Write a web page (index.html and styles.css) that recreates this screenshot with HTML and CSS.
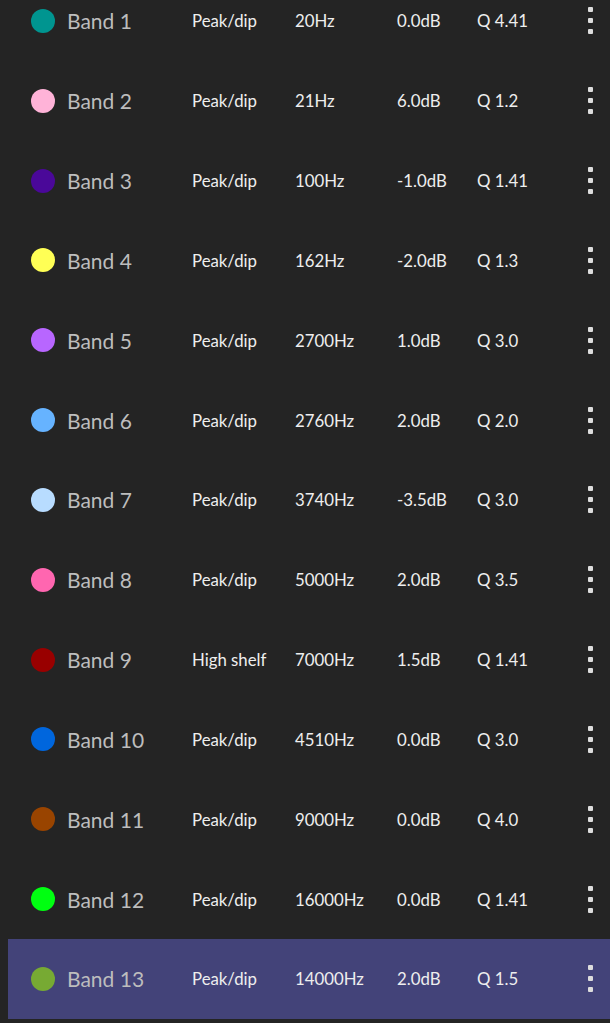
FILE: index.html
```html
<!DOCTYPE html>
<html>
<head>
<meta charset="utf-8">
<link rel="stylesheet" href="styles.css">
</head>
<body>
<ul class="bands">
  <li class="band"><span class="dot c1"></span><span class="name">Band 1</span><span class="cell">Peak/dip</span><span class="cell">20Hz</span><span class="cell">0.0dB</span><span class="cell">Q 4.41</span><span class="menu"><i></i><i></i><i></i></span></li>
  <li class="band"><span class="dot c2"></span><span class="name">Band 2</span><span class="cell">Peak/dip</span><span class="cell">21Hz</span><span class="cell">6.0dB</span><span class="cell">Q 1.2</span><span class="menu"><i></i><i></i><i></i></span></li>
  <li class="band"><span class="dot c3"></span><span class="name">Band 3</span><span class="cell">Peak/dip</span><span class="cell">100Hz</span><span class="cell">-1.0dB</span><span class="cell">Q 1.41</span><span class="menu"><i></i><i></i><i></i></span></li>
  <li class="band"><span class="dot c4"></span><span class="name">Band 4</span><span class="cell">Peak/dip</span><span class="cell">162Hz</span><span class="cell">-2.0dB</span><span class="cell">Q 1.3</span><span class="menu"><i></i><i></i><i></i></span></li>
  <li class="band"><span class="dot c5"></span><span class="name">Band 5</span><span class="cell">Peak/dip</span><span class="cell">2700Hz</span><span class="cell">1.0dB</span><span class="cell">Q 3.0</span><span class="menu"><i></i><i></i><i></i></span></li>
  <li class="band"><span class="dot c6"></span><span class="name">Band 6</span><span class="cell">Peak/dip</span><span class="cell">2760Hz</span><span class="cell">2.0dB</span><span class="cell">Q 2.0</span><span class="menu"><i></i><i></i><i></i></span></li>
  <li class="band"><span class="dot c7"></span><span class="name">Band 7</span><span class="cell">Peak/dip</span><span class="cell">3740Hz</span><span class="cell">-3.5dB</span><span class="cell">Q 3.0</span><span class="menu"><i></i><i></i><i></i></span></li>
  <li class="band"><span class="dot c8"></span><span class="name">Band 8</span><span class="cell">Peak/dip</span><span class="cell">5000Hz</span><span class="cell">2.0dB</span><span class="cell">Q 3.5</span><span class="menu"><i></i><i></i><i></i></span></li>
  <li class="band"><span class="dot c9"></span><span class="name">Band 9</span><span class="cell">High shelf</span><span class="cell">7000Hz</span><span class="cell">1.5dB</span><span class="cell">Q 1.41</span><span class="menu"><i></i><i></i><i></i></span></li>
  <li class="band"><span class="dot c10"></span><span class="name">Band 10</span><span class="cell">Peak/dip</span><span class="cell">4510Hz</span><span class="cell">0.0dB</span><span class="cell">Q 3.0</span><span class="menu"><i></i><i></i><i></i></span></li>
  <li class="band"><span class="dot c11"></span><span class="name">Band 11</span><span class="cell">Peak/dip</span><span class="cell">9000Hz</span><span class="cell">0.0dB</span><span class="cell">Q 4.0</span><span class="menu"><i></i><i></i><i></i></span></li>
  <li class="band"><span class="dot c12"></span><span class="name">Band 12</span><span class="cell">Peak/dip</span><span class="cell">16000Hz</span><span class="cell">0.0dB</span><span class="cell">Q 1.41</span><span class="menu"><i></i><i></i><i></i></span></li>
  <li class="band selected"><span class="dot c13"></span><span class="name">Band 13</span><span class="cell">Peak/dip</span><span class="cell">14000Hz</span><span class="cell">2.0dB</span><span class="cell">Q 1.5</span><span class="menu"><i></i><i></i><i></i></span></li>
</ul>
</body>
</html>
```
FILE: styles.css
```css
html, body {
  margin: 0;
  padding: 0;
  background: #242424;
  height: 100%;
  overflow: hidden;
}
body {
  font-family: Lato, "Open Sans", sans-serif;
}
.bands {
  list-style: none;
  margin: -19px 0 0 8px;
  padding: 0;
}
.band {
  height: 79.83px;
  display: grid;
  grid-template-columns: 36px 125px 103px 102px 80px 1fr 24px;
  align-items: center;
  padding: 0 8px 0 23px;
  box-sizing: border-box;
}
.band.selected {
  background: #434379;
}
.dot {
  width: 24px;
  height: 24px;
  border-radius: 50%;
  grid-column: 1;
}
.name {
  font-size: 21px;
  color: #bdbdbd;
}
.cell {
  font-size: 16.8px;
  color: #eeeeee;
}
.menu {
  grid-column: 7;
  display: flex;
  flex-direction: column;
  align-items: center;
  gap: 6px;
}
.menu i {
  display: block;
  width: 5px;
  height: 5px;
  border-radius: 1px;
  background: #dddddd;
}
.c1 { background: #009590; }
.c2 { background: #ffb3d8; }
.c3 { background: #4a0899; }
.c4 { background: #ffff55; }
.c5 { background: #b866ff; }
.c6 { background: #66b3ff; }
.c7 { background: #b8dcff; }
.c8 { background: #ff66b0; }
.c9 { background: #990000; }
.c10 { background: #0066dd; }
.c11 { background: #994400; }
.c12 { background: #00ff11; }
.c13 { background: #77aa33; }
```
